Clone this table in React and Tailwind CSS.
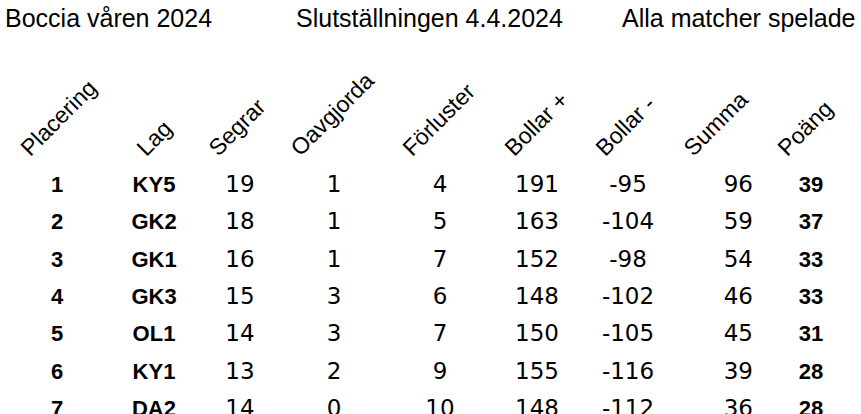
const columns = [
  { title: 'Placering', width: 'w-[114px]', head: 'ml-[33px]' },
  { title: 'Lag', width: 'w-[80px]', head: 'ml-[35px]' },
  { title: 'Segrar', width: 'w-[92px]', head: 'ml-[27px]' },
  { title: 'Oavgjorda', width: 'w-[96px]', head: 'ml-[17px]' },
  { title: 'Förluster', width: 'w-[116px]', head: 'ml-[33px]' },
  { title: 'Bollar +', width: 'w-[78px]', head: 'ml-[19px]' },
  { title: 'Bollar -', width: 'w-[104px]', head: 'ml-[32px]' },
  { title: 'Summa', width: 'w-[78px]', head: 'ml-[16px]' },
  { title: 'Poäng', width: 'w-[106px]', head: 'ml-[32px]' },
]

const rows = [
  [1, 'KY5', 19, 1, 4, 191, -95, 96, 39],
  [2, 'GK2', 18, 1, 5, 163, -104, 59, 37],
  [3, 'GK1', 16, 1, 7, 152, -98, 54, 33],
  [4, 'GK3', 15, 3, 6, 148, -102, 46, 33],
  [5, 'OL1', 14, 3, 7, 150, -105, 45, 31],
  [6, 'KY1', 13, 2, 9, 155, -116, 39, 28],
  [7, 'DA2', 14, 0, 10, 148, -112, 36, 28],
]

const arial = "font-['Liberation_Sans',Arial,sans-serif]"
const verdana = "font-['DejaVu_Sans',Verdana,sans-serif]"

function cellClass(i) {
  if (i === 0 || i === 1 || i === 8) return `${arial} font-bold text-center text-[22px]`
  if (i === 7) return `${verdana} text-right pr-[5px] text-[23px]`
  return `${verdana} text-center text-[23px]`
}

export default function App() {
  return (
    <div className="w-[861px] h-[414px] overflow-hidden bg-white text-black">
      <div className={`flex h-[36px] leading-[36px] text-[25px] ${arial}`}>
        <div className="w-[296px] pl-[5px]">Boccia våren 2024</div>
        <div className="w-[326px]">Slutställningen 4.4.2024</div>
        <div className="whitespace-nowrap">Alla matcher spelade</div>
      </div>

      <div className={`flex h-[130px] items-end pb-[6px] text-[23px] ${arial}`}>
        {columns.map((col) => (
          <div key={col.title} className={`${col.width} shrink-0 flex`}>
            <span className={`${col.head} inline-block leading-none whitespace-nowrap origin-bottom-left -rotate-45`}>
              {col.title}
            </span>
          </div>
        ))}
      </div>

      {rows.map((row) => (
        <div key={row[0]} className="flex h-[37.33px] leading-[37.33px]">
          {row.map((value, i) => (
            <div key={i} className={`${columns[i].width} shrink-0 ${cellClass(i)}`}>
              {value}
            </div>
          ))}
        </div>
      ))}
    </div>
  )
}
